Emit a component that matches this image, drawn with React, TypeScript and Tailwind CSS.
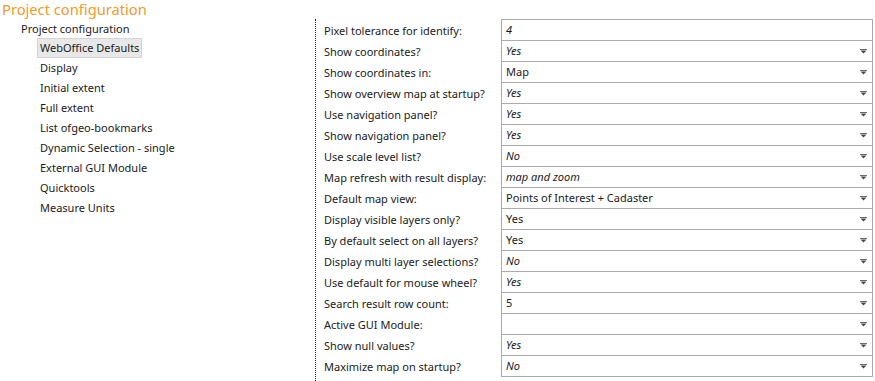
import React from "react";

interface Row {
  label: string;
  value: string;
  italic?: boolean;
  dropdown?: boolean;
}

const rows: Row[] = [
  { label: "Pixel tolerance for identify:", value: "4", italic: true, dropdown: false },
  { label: "Show coordinates?", value: "Yes", italic: true, dropdown: true },
  { label: "Show coordinates in:", value: "Map", dropdown: true },
  { label: "Show overview map at startup?", value: "Yes", italic: true, dropdown: true },
  { label: "Use navigation panel?", value: "Yes", italic: true, dropdown: true },
  { label: "Show navigation panel?", value: "Yes", italic: true, dropdown: true },
  { label: "Use scale level list?", value: "No", italic: true, dropdown: true },
  { label: "Map refresh with result display:", value: "map and zoom", italic: true, dropdown: true },
  { label: "Default map view:", value: "Points of Interest + Cadaster", dropdown: true },
  { label: "Display visible layers only?", value: "Yes", dropdown: true },
  { label: "By default select on all layers?", value: "Yes", dropdown: true },
  { label: "Display multi layer selections?", value: "No", italic: true, dropdown: true },
  { label: "Use default for mouse wheel?", value: "Yes", italic: true, dropdown: true },
  { label: "Search result row count:", value: "5", dropdown: true },
  { label: "Active GUI Module:", value: "", dropdown: true },
  { label: "Show null values?", value: "Yes", italic: true, dropdown: true },
  { label: "Maximize map on startup?", value: "No", italic: true, dropdown: true },
];

const treeItems = [
  "WebOffice Defaults",
  "Display",
  "Initial extent",
  "Full extent",
  "List ofgeo-bookmarks",
  "Dynamic Selection - single",
  "External GUI Module",
  "Quicktools",
  "Measure Units",
];

function Arrow() {
  return (
    <svg width="7" height="5" viewBox="0 0 7 5" className="shrink-0">
      <rect x="0" y="0" width="7" height="1" fill="#6b6b6b" />
      <path d="M0.5 1.5 H6.5 L3.5 4.5 Z" fill="#4a4a4a" />
    </svg>
  );
}

export default function App() {
  return (
    <div className="w-[875px] h-[381px] bg-white overflow-hidden font-['Noto_Sans','Open_Sans',sans-serif] text-[11px] text-[#1a1a1a]">
      {/* Page title */}
      <div className="h-[19px] pl-[2px] text-[14.7px] leading-[19px] text-[#f09a30]">Project configuration</div>

      <div className="flex h-[362px]">
        {/* Tree */}
        <div className="w-[315px] shrink-0">
          <div className="pl-[21px] h-[19px] leading-[19px]">Project configuration</div>
          <div className="flex flex-col pl-[37px]">
            {treeItems.map((item, i) => (
              <div key={item} className="h-[20px] flex items-center">
                <span
                  className={
                    i === 0
                      ? "px-[2px] h-[20px] leading-[18px] bg-[#e8e8e8] border border-[#d4d4d4]"
                      : "px-[3px] leading-[18px]"
                  }
                >
                  {item}
                </span>
              </div>
            ))}
          </div>
        </div>

        {/* Form */}
        <div className="flex-1 border-l border-dotted border-[#222] pl-[8px]">
          {rows.map((row, i) => (
            <div key={row.label} className="flex h-[21px]">
              <div className="w-[177px] shrink-0 leading-[23px]">{row.label}</div>
              <div
                className={`flex-1 mr-[2px] flex items-center justify-between pl-[4px] pr-[5px] border-t border-x border-[#ababab] ${
                  i === rows.length - 1 ? "border-b h-[22px]" : ""
                }`}
              >
                <span className={row.italic ? "italic" : ""}>{row.value}</span>
                {row.dropdown && <Arrow />}
              </div>
            </div>
          ))}
        </div>
      </div>
    </div>
  );
}
